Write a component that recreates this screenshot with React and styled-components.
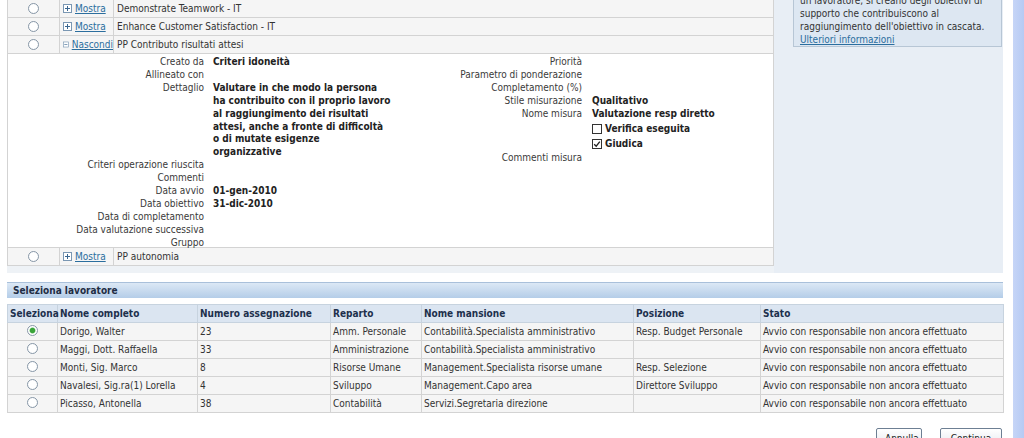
import React from "react";
import styled, { createGlobalStyle } from "styled-components";

const font = `"DejaVu Sans Condensed", "DejaVu Sans", sans-serif`;
const linkColor = "#2b6e9e";
const lineColor = "#d3d3d3";

const GlobalStyle = createGlobalStyle`
  html, body {
    margin: 0;
    padding: 0;
    background: #fff;
    overflow: hidden;
  }
  body {
    font-family: ${font};
    font-stretch: condensed;
    font-size: 10px;
    color: #333;
  }
`;

const Screen = styled.div`
  display: flex;
  width: 1024px;
  height: 438px;
  overflow: hidden;
`;

const Page = styled.div`
  width: 996px;
  padding: 0 10px 0 7px;
  display: flex;
  flex-direction: column;
`;

const Scrollbar = styled.div`
  width: 11px;
  background: linear-gradient(to right, #c6d5f7, #b6caf3);
`;

const TopSection = styled.div`
  display: flex;
  align-items: stretch;
`;

const ObjectiveTable = styled.div`
  width: 767px;
  display: flex;
  flex-direction: column;
`;

const ObjRow = styled.div`
  display: grid;
  grid-template-columns: 51px 55px 1fr;
  height: 18px;
  background: #f5f5f5;
  border-left: 1px solid ${lineColor};
  border-right: 1px solid ${lineColor};
  border-bottom: 1px solid ${lineColor};
  box-sizing: border-box;
  align-items: center;
  line-height: 17px;
`;

const RadioCell = styled.div`
  display: flex;
  justify-content: center;
  align-items: center;
  height: 100%;
`;

const LinkCell = styled.div`
  display: flex;
  align-items: center;
  gap: 3px;
  height: 100%;
  padding-left: 3px;
  border-left: 1px solid ${lineColor};
  border-right: 1px solid ${lineColor};
  white-space: nowrap;
  overflow: hidden;
`;

const TitleCell = styled.div`
  padding-left: 3px;
  white-space: nowrap;
`;

const Link = styled.a`
  color: ${linkColor};
  text-decoration: underline;
  cursor: pointer;
`;

const Radio = styled.span`
  display: inline-block;
  width: 11px;
  height: 11px;
  box-sizing: border-box;
  border: 1px solid #8797a7;
  border-radius: 50%;
  background: ${(p) =>
    p.$checked
      ? "radial-gradient(circle, #39a339 0 2.2px, #8fcf8f 2.8px, #fff 3.4px)"
      : "radial-gradient(circle, #fff 60%, #e9edf1)"};
`;

const Detail = styled.div`
  display: flex;
  height: 194px;
  box-sizing: border-box;
  padding-top: 2px;
  background: #fff;
  border-left: 1px solid ${lineColor};
  border-right: 1px solid ${lineColor};
  border-bottom: 1px solid ${lineColor};
`;

const FieldGrid = styled.div`
  display: grid;
  grid-template-columns: ${(p) => p.$label}px auto;
  column-gap: ${(p) => p.$gap}px;
  align-content: start;
  width: ${(p) => p.$width}px;
  line-height: 12.9px;
`;

const Label = styled.div`
  text-align: right;
  white-space: nowrap;
  color: #3a3a3a;
`;

const Value = styled.div`
  font-weight: bold;
  color: #222;
  white-space: nowrap;
`;

const CheckValue = styled(Value)`
  display: flex;
  align-items: center;
  gap: 3px;
  height: 15px;
  margin-top: ${(p) => p.$top || 0}px;
`;

const Box = styled.span`
  width: 10px;
  height: 10px;
  box-sizing: border-box;
  border: 1px solid #333;
  background: #fff;
  display: inline-flex;
`;

const TableFoot = styled.div`
  height: 7px;
  background: #eef2f6;
`;

const SidePanel = styled.div`
  width: 229px;
  background: #e8eef5;
  overflow: hidden;
`;

const InfoBox = styled.div`
  margin: -8px 1px 0 19px;
  padding: 1px 6px 0;
  background: #dde7f2;
  border: 1px solid #b7c6d5;
  line-height: 13px;
  color: #333;
`;

const SectionBar = styled.div`
  margin-top: 9px;
  height: 16px;
  box-sizing: border-box;
  padding-left: 6px;
  line-height: 15px;
  font-weight: bold;
  color: #1f2d44;
  background: linear-gradient(#dce8f5, #b4cde8);
  border-top: 1px solid #a9c0da;
`;

const Table = styled.table`
  margin-top: 6px;
  width: 996px;
  border-collapse: collapse;
  table-layout: fixed;
`;

const Th = styled.th`
  height: 17px;
  padding: 0 2px;
  text-align: left;
  font-weight: bold;
  color: #1d304c;
  background: #dbe5f1;
  border: 1px solid #c7d3df;
  white-space: nowrap;
`;

const Td = styled.td`
  height: 18px;
  padding: 0 2px;
  box-sizing: border-box;
  background: #f5f5f5;
  border: 1px solid ${lineColor};
  white-space: nowrap;
  text-align: ${(p) => (p.$center ? "center" : "left")};
  line-height: 10px;
  vertical-align: middle;
`;

const ButtonRow = styled.div`
  margin-top: 15px;
  display: flex;
  justify-content: flex-end;
  gap: 18px;
  padding-right: 1px;
`;

const Button = styled.button`
  height: 20px;
  padding: 0 8px;
  font-family: ${font};
  font-size: 10px;
  color: #222;
  background: linear-gradient(#ffffff, #e3e8ee);
  border: 1px solid #6d7f93;
  border-radius: 2px;
  width: ${(p) => p.$w}px;
`;

const ToggleIcon = ({ open }) => (
  <svg width="9" height="9" viewBox="0 0 9 9">
    <rect x="0.5" y="0.5" width="8" height="8" fill="#fff" stroke="#7a97b3" />
    <line x1="2" y1="4.5" x2="7" y2="4.5" stroke="#3a6690" />
    {!open && <line x1="4.5" y1="2" x2="4.5" y2="7" stroke="#3a6690" />}
  </svg>
);

const CheckIcon = () => (
  <svg width="8" height="8" viewBox="0 0 8 8">
    <path d="M1.2 4.2 L3.2 6.2 L6.8 1.6" fill="none" stroke="#222" strokeWidth="1.3" />
  </svg>
);

const Objective = ({ title, open }) => (
  <ObjRow>
    <RadioCell>
      <Radio />
    </RadioCell>
    <LinkCell>
      <ToggleIcon open={open} />
      <Link>{open ? "Nascondi" : "Mostra"}</Link>
    </LinkCell>
    <TitleCell>{title}</TitleCell>
  </ObjRow>
);

const workers = [
  ["Dorigo, Walter", "23", "Amm. Personale", "Contabilità.Specialista amministrativo", "Resp. Budget Personale", true],
  ["Maggi, Dott. Raffaella", "33", "Amministrazione", "Contabilità.Specialista amministrativo", "", false],
  ["Monti, Sig. Marco", "8", "Risorse Umane", "Management.Specialista risorse umane", "Resp. Selezione", false],
  ["Navalesi, Sig.ra(1) Lorella", "4", "Sviluppo", "Management.Capo area", "Direttore Sviluppo", false],
  ["Picasso, Antonella", "38", "Contabilità", "Servizi.Segretaria direzione", "", false],
];

const colWidths = [50, 140, 133, 91, 212, 127, 243];
const headers = ["Seleziona", "Nome completo", "Numero assegnazione", "Reparto", "Nome mansione", "Posizione", "Stato"];

const App = () => {
  return (
    <Screen>
      <GlobalStyle />
      <Page>
        <TopSection>
          <ObjectiveTable>
            <Objective title="Demonstrate Teamwork - IT" />
            <Objective title="Enhance Customer Satisfaction - IT" />
            <Objective title="PP Contributo risultati attesi" open />
            <Detail>
              <FieldGrid $label={196} $gap={9} $width={392}>
                <Label>Creato da</Label>
                <Value>Criteri idoneità</Value>
                <Label>Allineato con</Label>
                <Value />
                <Label>Dettaglio</Label>
                <Value>
                  Valutare in che modo la persona
                  <br />
                  ha contribuito con il proprio lavoro
                  <br />
                  al raggiungimento dei risultati
                  <br />
                  attesi, anche a fronte di difficoltà
                  <br />o di mutate esigenze
                  <br />
                  organizzative
                </Value>
                <Label>Criteri operazione riuscita</Label>
                <Value />
                <Label>Commenti</Label>
                <Value />
                <Label>Data avvio</Label>
                <Value>01-gen-2010</Value>
                <Label>Data obiettivo</Label>
                <Value>31-dic-2010</Value>
                <Label>Data di completamento</Label>
                <Value />
                <Label>Data valutazione successiva</Label>
                <Value />
                <Label>Gruppo</Label>
                <Value />
              </FieldGrid>
              <FieldGrid $label={182} $gap={10} $width={370}>
                <Label>Priorità</Label>
                <Value />
                <Label>Parametro di ponderazione</Label>
                <Value />
                <Label>Completamento (%)</Label>
                <Value />
                <Label>Stile misurazione</Label>
                <Value>Qualitativo</Value>
                <Label>Nome misura</Label>
                <Value>Valutazione resp diretto</Value>
                <Label />
                <CheckValue $top={1}>
                  <Box />
                  Verifica eseguita
                </CheckValue>
                <Label />
                <CheckValue>
                  <Box>
                    <CheckIcon />
                  </Box>
                  Giudica
                </CheckValue>
                <Label>Commenti misura</Label>
                <Value />
              </FieldGrid>
            </Detail>
            <Objective title="PP autonomia" />
            <TableFoot />
          </ObjectiveTable>
          <SidePanel>
            <InfoBox>
              un lavoratore, si creano degli obiettivi di
              <br />
              supporto che contribuiscono al
              <br />
              raggiungimento dell'obiettivo in cascata.
              <br />
              <Link>Ulteriori informazioni</Link>
            </InfoBox>
          </SidePanel>
        </TopSection>

        <SectionBar>Seleziona lavoratore</SectionBar>
        <Table>
          <colgroup>
            {colWidths.map((w, i) => (
              <col key={i} style={{ width: w }} />
            ))}
          </colgroup>
          <thead>
            <tr>
              {headers.map((h) => (
                <Th key={h}>{h}</Th>
              ))}
            </tr>
          </thead>
          <tbody>
            {workers.map((w) => (
              <tr key={w[0]}>
                <Td $center>
                  <Radio $checked={w[5]} />
                </Td>
                <Td>{w[0]}</Td>
                <Td>{w[1]}</Td>
                <Td>{w[2]}</Td>
                <Td>{w[3]}</Td>
                <Td>{w[4]}</Td>
                <Td>Avvio con responsabile non ancora effettuato</Td>
              </tr>
            ))}
          </tbody>
        </Table>
        <TableFoot />
        <ButtonRow>
          <Button $w={46}>Annulla</Button>
          <Button $w={62}>Continua</Button>
        </ButtonRow>
      </Page>
      <Scrollbar />
    </Screen>
  );
};

export default App;
